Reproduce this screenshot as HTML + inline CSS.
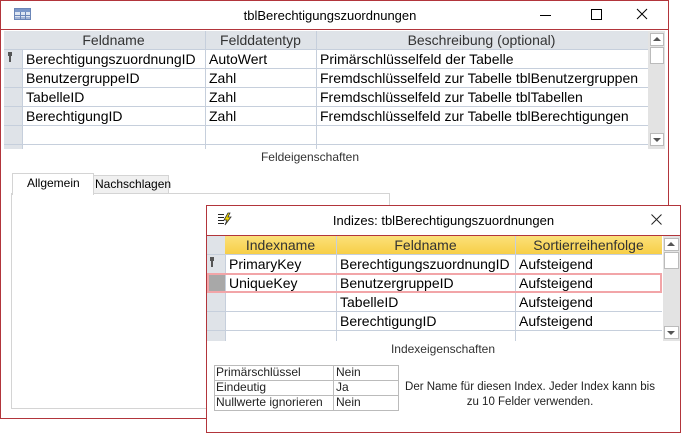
<!DOCTYPE html>
<html><head><meta charset="utf-8"><style>
*{box-sizing:border-box;margin:0;padding:0}
body{width:681px;height:433px;background:#fff;position:relative;overflow:hidden;font-family:"Liberation Sans",sans-serif;font-size:14px;color:#000}
.a{position:absolute}
.t{position:absolute;white-space:nowrap;line-height:19px}
.hl{position:absolute;height:1px;background:#c6cfdc}
.vl{position:absolute;width:1px;background:#c6cfdc}
.h{color:#333;font-size:14px;line-height:18px;text-align:center}
.s{font-size:12px;line-height:15px;color:#222}
</style></head><body>
<div class="a" style="left:0;top:0;width:669px;height:419px;border:1px solid #b2353b;background:#fff"></div>
<svg class="a" style="left:14px;top:8px" width="17" height="12"><rect x="0.5" y="0.5" width="16" height="11" fill="#dfe7f3" stroke="#6b86b8"/><rect x="1" y="1" width="15" height="3" fill="#7b97c8"/><path d="M1 7.5H16M1 10H16M6.5 4V11M11.5 4V11" stroke="#6b86b8"/></svg>
<div class="t" style="left:200px;top:6px;width:260px;text-align:center;font-size:13px">tblBerechtigungszuordnungen</div>
<div class="a" style="left:540px;top:15px;width:11px;height:1px;background:#000"></div>
<div class="a" style="left:591px;top:9px;width:11px;height:11px;border:1px solid #000"></div>
<svg class="a" style="left:636px;top:8px" width="12" height="12"><path d="M1 1L11 11M11 1L1 11" stroke="#000"/></svg>
<div class="a" style="left:1px;top:29px;width:667px;height:1px;background:#b2353b"></div>
<div class="a" style="left:4px;top:31px;width:644px;height:18px;background:#dfe3e8"></div>
<div class="a" style="left:4px;top:49px;width:18px;height:100px;background:#dfe3e8"></div>
<div class="vl" style="left:22px;top:49px;height:100px"></div>
<div class="vl" style="left:205px;top:31px;height:118px"></div>
<div class="vl" style="left:316px;top:31px;height:118px"></div>
<div class="hl" style="left:4px;top:49px;width:644px"></div>
<div class="hl" style="left:4px;top:68px;width:644px"></div>
<div class="hl" style="left:4px;top:87px;width:644px"></div>
<div class="hl" style="left:4px;top:106px;width:644px"></div>
<div class="hl" style="left:4px;top:125px;width:644px"></div>
<div class="hl" style="left:4px;top:144px;width:644px"></div>
<div class="t h" style="left:22px;top:31px;width:183px">Feldname</div>
<div class="t h" style="left:205px;top:31px;width:111px">Felddatentyp</div>
<div class="t h" style="left:316px;top:31px;width:331px">Beschreibung (optional)</div>
<svg class="a" style="left:7px;top:51px" width="6" height="12"><path d="M1 1h4v4h-1v6h-2v-6h-1z" fill="#555"/></svg>
<div class="t" style="left:26px;top:50px">BerechtigungszuordnungID</div>
<div class="t" style="left:26px;top:69px">BenutzergruppeID</div>
<div class="t" style="left:26px;top:88px">TabelleID</div>
<div class="t" style="left:26px;top:107px">BerechtigungID</div>
<div class="t" style="left:209px;top:50px">AutoWert</div>
<div class="t" style="left:209px;top:69px">Zahl</div>
<div class="t" style="left:209px;top:88px">Zahl</div>
<div class="t" style="left:209px;top:107px">Zahl</div>
<div class="t" style="left:320px;top:50px">Primärschlüsselfeld der Tabelle</div>
<div class="t" style="left:320px;top:69px">Fremdschlüsselfeld zur Tabelle tblBenutzergruppen</div>
<div class="t" style="left:320px;top:88px">Fremdschlüsselfeld zur Tabelle tblTabellen</div>
<div class="t" style="left:320px;top:107px">Fremdschlüsselfeld zur Tabelle tblBerechtigungen</div>
<div class="a" style="left:648px;top:31px;width:17px;height:118px;background:#e3e3e3"></div>
<div class="a" style="left:650px;top:33px;width:14px;height:13px;background:#fff;border:1px solid #bbb"></div>
<div class="a" style="left:650px;top:47px;width:14px;height:17px;background:#fff;border:1px solid #bbb"></div>
<div class="a" style="left:650px;top:133px;width:14px;height:13px;background:#fff;border:1px solid #bbb"></div>
<svg class="a" style="left:653px;top:37px" width="8" height="5"><path d="M0 4L4 0L8 4z" fill="#555"/></svg>
<svg class="a" style="left:653px;top:138px" width="8" height="5"><path d="M0 0L8 0L4 4z" fill="#555"/></svg>
<div class="t" style="left:230px;top:148px;width:160px;text-align:center;font-size:12px;color:#333">Feldeigenschaften</div>
<div class="a" style="left:11px;top:193px;width:379px;height:216px;border:1px solid #d4d4d4"></div>
<div class="a" style="left:93px;top:175px;width:76px;height:19px;background:#f0f0f0;border:1px solid #d4d4d4"></div>
<div class="t" style="left:95px;top:175px;font-size:12px">Nachschlagen</div>
<div class="a" style="left:12px;top:173px;width:82px;height:22px;background:#fff;border:1px solid #d4d4d4;border-bottom:none"></div>
<div class="t" style="left:27px;top:174px;font-size:12px">Allgemein</div>
<div class="a" style="left:206px;top:205px;width:475px;height:228px;background:#fff;border:1px solid #b2353b"></div>
<div class="a" style="left:207px;top:235px;width:473px;height:1px;background:#b2353b"></div>
<svg class="a" style="left:217px;top:212px" width="18" height="14"><path d="M1 2.5h6M1 5.5h6M1 8.5h6M1 11.5h6" stroke="#222"/><path d="M11 1L7 8H10L8 13L14 5H11L13 1z" fill="#f3d900" stroke="#333" stroke-width=".8"/></svg>
<div class="t" style="left:306px;top:211px;width:275px;text-align:center;font-size:13px">Indizes: tblBerechtigungszuordnungen</div>
<svg class="a" style="left:651px;top:214px" width="11" height="11"><path d="M0.5 0.5L10.5 10.5M10.5 0.5L0.5 10.5" stroke="#222"/></svg>
<div class="a" style="left:207px;top:236px;width:18px;height:105px;background:#dfe3e8"></div>
<div class="a" style="left:225px;top:236px;width:437px;height:18px;background:linear-gradient(#fbe17a,#f7cf47)"></div>
<div class="vl" style="left:225px;top:254px;height:87px"></div>
<div class="vl" style="left:336px;top:236px;height:105px"></div>
<div class="vl" style="left:515px;top:236px;height:105px"></div>
<div class="hl" style="left:207px;top:254px;width:455px"></div>
<div class="hl" style="left:207px;top:311px;width:455px"></div>
<div class="hl" style="left:207px;top:330px;width:455px"></div>
<div class="a" style="left:207px;top:273px;width:455px;height:20px;border:2px solid #f2a5a8"></div>
<div class="a" style="left:209px;top:275px;width:16px;height:16px;background:#a8a8a8"></div>
<div class="t h" style="left:225px;top:236px;width:111px">Indexname</div>
<div class="t h" style="left:336px;top:236px;width:179px">Feldname</div>
<div class="t h" style="left:515px;top:236px;width:147px">Sortierreihenfolge</div>
<svg class="a" style="left:209px;top:256px" width="6" height="12"><path d="M1 1h4v4h-1v6h-2v-6h-1z" fill="#555"/></svg>
<div class="t" style="left:229px;top:255px">PrimaryKey</div>
<div class="t" style="left:229px;top:274px">UniqueKey</div>
<div class="t" style="left:340px;top:255px">BerechtigungszuordnungID</div>
<div class="t" style="left:340px;top:274px">BenutzergruppeID</div>
<div class="t" style="left:340px;top:293px">TabelleID</div>
<div class="t" style="left:340px;top:312px">BerechtigungID</div>
<div class="t" style="left:519px;top:255px">Aufsteigend</div>
<div class="t" style="left:519px;top:274px">Aufsteigend</div>
<div class="t" style="left:519px;top:293px">Aufsteigend</div>
<div class="t" style="left:519px;top:312px">Aufsteigend</div>
<div class="a" style="left:663px;top:236px;width:17px;height:105px;background:#e3e3e3"></div>
<div class="a" style="left:664px;top:238px;width:15px;height:13px;background:#fff;border:1px solid #bbb"></div>
<div class="a" style="left:664px;top:252px;width:15px;height:17px;background:#fff;border:1px solid #bbb"></div>
<div class="a" style="left:664px;top:326px;width:15px;height:13px;background:#fff;border:1px solid #bbb"></div>
<svg class="a" style="left:667px;top:242px" width="8" height="5"><path d="M0 4L4 0L8 4z" fill="#555"/></svg>
<svg class="a" style="left:667px;top:331px" width="8" height="5"><path d="M0 0L8 0L4 4z" fill="#555"/></svg>
<div class="t" style="left:363px;top:340px;width:160px;text-align:center;font-size:12px;color:#333">Indexeigenschaften</div>
<div class="a" style="left:214px;top:365px;width:185px;height:46px;border:1px solid #bbb"></div>
<div class="a" style="left:333px;top:365px;width:1px;height:46px;background:#bbb"></div>
<div class="a" style="left:214px;top:380px;width:185px;height:1px;background:#bbb"></div>
<div class="a" style="left:214px;top:395px;width:185px;height:1px;background:#bbb"></div>
<div class="t s" style="left:216px;top:365px">Primärschlüssel</div>
<div class="t s" style="left:216px;top:380px">Eindeutig</div>
<div class="t s" style="left:216px;top:395px">Nullwerte ignorieren</div>
<div class="t s" style="left:336px;top:365px">Nein</div>
<div class="t s" style="left:336px;top:380px">Ja</div>
<div class="t s" style="left:336px;top:395px">Nein</div>
<div class="t s" style="left:400px;top:380px;width:260px;text-align:center;font-size:11.5px">Der Name für diesen Index. Jeder Index kann bis</div>
<div class="t s" style="left:400px;top:395px;width:260px;text-align:center;font-size:11.5px">zu 10 Felder verwenden.</div>
</body></html>
